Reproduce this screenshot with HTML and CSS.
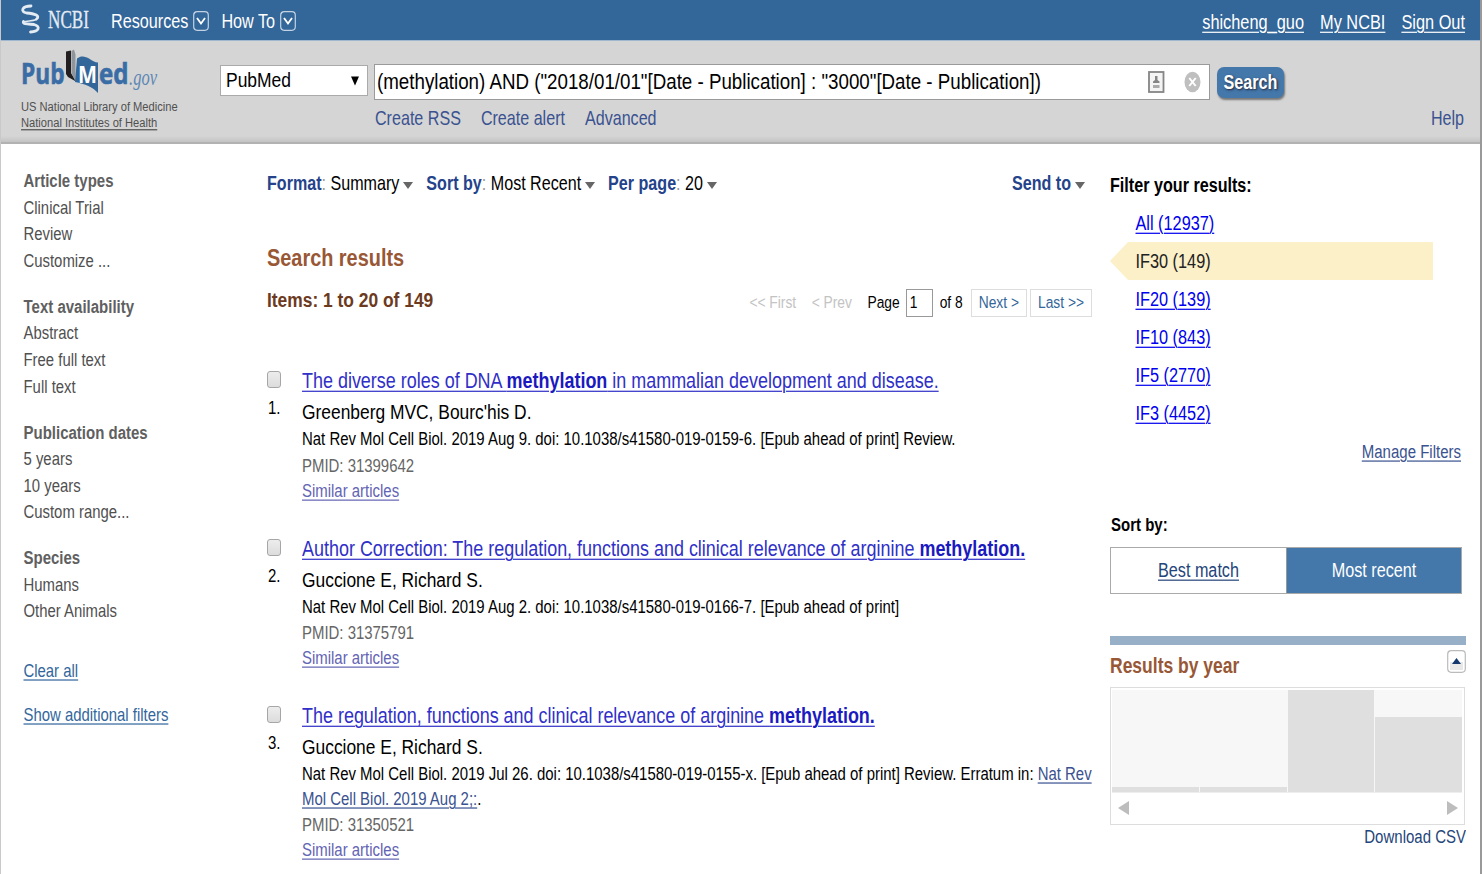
FILE: index.html
```html
<!DOCTYPE html>
<html lang="en">
<head>
<meta charset="utf-8">
<title>PubMed search results</title>
<link rel="stylesheet" href="styles.css">
</head>
<body>
<div class="page">
  <nav class="topbar">
    <svg class="ncbi" width="76" height="34" viewBox="0 0 76 34">
      <g fill="none" stroke="#e3ebf3" stroke-linecap="round">
        <path d="M10 4C1 4-1 9.500 5.500 11C14 11.500 19.500 14 15.500 17" stroke-width="2.800"/>
        <path d="M15.500 17.500C11 19.500 6 18.500 2.500 20" stroke-width="1.400"/>
        <path d="M2.500 19.500C1 22.500 8 22 13 22.500C20 24.500 18 29.500 9.500 30" stroke-width="2.800"/>
      </g>
      <text class="ncbi-word" x="27" y="25.500" textLength="41" lengthAdjust="spacingAndGlyphs">NCBI</text>
    </svg>
    <a class="menu"><span class="t">Resources</span><svg width="16" height="20" viewBox="0 0 16 20"><rect x=".7" y=".7" width="14.600" height="18.600" rx="3.500" fill="none" stroke="#c3d3e3" stroke-width="1.200"/><path d="M4 7l4 5.500L12 7" fill="none" stroke="#fff" stroke-width="1.800"/></svg></a>
    <a class="menu"><span class="t">How To</span><svg width="16" height="20" viewBox="0 0 16 20"><rect x=".7" y=".7" width="14.600" height="18.600" rx="3.500" fill="none" stroke="#c3d3e3" stroke-width="1.200"/><path d="M4 7l4 5.500L12 7" fill="none" stroke="#fff" stroke-width="1.800"/></svg></a>
    <div class="account"><a class="t u">shicheng_guo</a><a class="t u">My NCBI</a><a class="t u">Sign Out</a></div>
  </nav>

  <header class="header">
    <div class="brand">
      <svg width="150" height="50" viewBox="0 0 150 50">
        <path d="M45 3.500l5-1v22.500l5 8.500-8-4.500-2-3z" fill="#231f20"/>
        <path d="M50.500 3l2.500-1.500 1.500 5v27l-4-8.500z" fill="#8f959c"/>
        <path d="M56 10.500c4-3.500 9-2 12 0 3 2 6 4 9 4v30.500c-5-6-13-9-23-11z" fill="#336699"/>
        <text class="pub" x="0" y="36" textLength="43.500" lengthAdjust="spacingAndGlyphs">Pub</text>
        <text class="em" x="57" y="34.500" textLength="19" lengthAdjust="spacingAndGlyphs">M</text>
        <text class="pub" x="78" y="36" textLength="29.500" lengthAdjust="spacingAndGlyphs">ed</text>
        <text class="gov" x="108" y="36.500" textLength="28" lengthAdjust="spacingAndGlyphs">.gov</text>
      </svg>
      <div class="org"><span class="t">US National Library of Medicine</span></div>
      <div class="org"><a class="t u">National Institutes of Health</a></div>
    </div>
    <div class="search">
      <div class="searchrow">
        <div class="select"><span class="t">PubMed</span><svg width="8" height="10" viewBox="0 0 8 10"><path d="M0 .5h8L4 9.500z" fill="#000"/></svg></div>
        <div class="query"><span class="t">(methylation) AND ("2018/01/01"[Date - Publication] : "3000"[Date - Publication])</span>
          <svg class="card" width="17" height="22" viewBox="0 0 17 22"><rect x="1" y="1" width="14.500" height="20" fill="#f4f4f4" stroke="#858585" stroke-width="1.800"/><path d="M7 5h2.500v4l2 1.500v1.500H5v-1.500L7 9z" fill="#858585"/><rect x="5" y="14" width="6.500" height="3" fill="#aaa"/></svg>
          <svg width="17" height="22" viewBox="0 0 17 22"><ellipse cx="8.500" cy="11" rx="8" ry="10.300" fill="#bfbfbf"/><path d="M5.300 7l6.400 8M11.700 7l-6.400 8" stroke="#fff" stroke-width="2"/></svg>
        </div>
        <div class="go"><span class="t">Search</span></div>
      </div>
      <div class="links"><a class="t">Create RSS</a><a class="t">Create alert</a><a class="t">Advanced</a><a class="t help">Help</a></div>
    </div>
  </header>

  <main class="main">
    <aside class="side">
      <div class="group"><h3><span class="t">Article types</span></h3><div><span class="t">Clinical Trial</span></div><div><span class="t">Review</span></div><div><span class="t">Customize ...</span></div></div>
      <div class="group"><h3><span class="t">Text availability</span></h3><div><span class="t">Abstract</span></div><div><span class="t">Free full text</span></div><div><span class="t">Full text</span></div></div>
      <div class="group"><h3><span class="t">Publication dates</span></h3><div><span class="t">5 years</span></div><div><span class="t">10 years</span></div><div><span class="t">Custom range...</span></div></div>
      <div class="group"><h3><span class="t">Species</span></h3><div><span class="t">Humans</span></div><div><span class="t">Other Animals</span></div></div>
      <div class="more first"><a class="t u">Clear all</a></div>
      <div class="more"><a class="t u">Show additional filters</a></div>
    </aside>

    <section class="results">
      <div class="display">
        <span class="opt"><span class="t"><b>Format</b><i>:</i> Summary</span><svg width="10" height="7" viewBox="0 0 10 7"><path d="M0 0h10L5 7z" fill="#666"/></svg></span>
        <span class="opt sort"><span class="t"><b>Sort by</b><i>:</i> Most Recent</span><svg width="10" height="7" viewBox="0 0 10 7"><path d="M0 0h10L5 7z" fill="#666"/></svg></span>
        <span class="opt"><span class="t"><b>Per page</b><i>:</i> 20</span><svg width="10" height="7" viewBox="0 0 10 7"><path d="M0 0h10L5 7z" fill="#666"/></svg></span>
        <span class="opt send"><span class="t"><b>Send to</b></span><svg width="10" height="7" viewBox="0 0 10 7"><path d="M0 0h10L5 7z" fill="#666"/></svg></span>
      </div>
      <h2 class="heading"><span class="t">Search results</span></h2>
      <div class="count">
        <h3><span class="t">Items: 1 to 20 of 149</span></h3>
        <div class="pager">
          <span class="t off">&lt;&lt; First</span><span class="t off prev">&lt; Prev</span><span class="t">Page</span><span class="num"><span class="t">1</span></span><span class="t of">of 8</span><a class="btn"><span class="t">Next &gt;</span></a><a class="btn last"><span class="t">Last &gt;&gt;</span></a>
        </div>
      </div>

      <article class="item">
        <div class="pick"><span class="box"></span><span class="t">1.</span></div>
        <div class="body">
          <div class="title"><a class="t u">The diverse roles of DNA <b>methylation</b> in mammalian development and disease.</a></div>
          <div class="authors"><span class="t">Greenberg MVC, Bourc'his D.</span></div>
          <div class="journal"><span class="t">Nat Rev Mol Cell Biol. 2019 Aug 9. doi: 10.1038/s41580-019-0159-6. [Epub ahead of print] Review.</span></div>
          <div class="pmid"><span class="t">PMID: 31399642</span></div>
          <div class="similar"><a class="t u">Similar articles</a></div>
        </div>
      </article>
      <article class="item">
        <div class="pick"><span class="box"></span><span class="t">2.</span></div>
        <div class="body">
          <div class="title"><a class="t u">Author Correction: The regulation, functions and clinical relevance of arginine <b>methylation.</b></a></div>
          <div class="authors"><span class="t">Guccione E, Richard S.</span></div>
          <div class="journal"><span class="t">Nat Rev Mol Cell Biol. 2019 Aug 2. doi: 10.1038/s41580-019-0166-7. [Epub ahead of print]</span></div>
          <div class="pmid"><span class="t">PMID: 31375791</span></div>
          <div class="similar"><a class="t u">Similar articles</a></div>
        </div>
      </article>
      <article class="item">
        <div class="pick"><span class="box"></span><span class="t">3.</span></div>
        <div class="body">
          <div class="title"><a class="t u">The regulation, functions and clinical relevance of arginine <b>methylation.</b></a></div>
          <div class="authors"><span class="t">Guccione E, Richard S.</span></div>
          <div class="journal"><span class="t">Nat Rev Mol Cell Biol. 2019 Jul 26. doi: 10.1038/s41580-019-0155-x. [Epub ahead of print] Review. Erratum in: <a class="u">Nat Rev</a></span></div>
          <div class="journal"><span class="t"><a class="u">Mol Cell Biol. 2019 Aug 2;:</a>.</span></div>
          <div class="pmid"><span class="t">PMID: 31350521</span></div>
          <div class="similar"><a class="t u">Similar articles</a></div>
        </div>
      </article>
    </section>

    <aside class="tools">
      <h3 class="label"><span class="t">Filter your results:</span></h3>
      <ul class="filters">
        <li><a class="t u">All (12937)</a></li>
        <li class="on"><span class="t">IF30 (149)</span></li>
        <li><a class="t u">IF20 (139)</a></li>
        <li><a class="t u">IF10 (843)</a></li>
        <li><a class="t u">IF5 (2770)</a></li>
        <li><a class="t u">IF3 (4452)</a></li>
      </ul>
      <div class="manage"><a class="t u">Manage Filters</a></div>
      <h3 class="label sortlabel"><span class="t">Sort by:</span></h3>
      <div class="toggle"><div><a class="t u">Best match</a></div><div class="active"><span class="t">Most recent</span></div></div>
      <div class="year">
        <div class="yearhead"><h3><span class="t">Results by year</span></h3><svg width="19" height="23" viewBox="0 0 19 23"><rect x=".7" y=".7" width="17.600" height="21.600" rx="3.500" fill="#fff" stroke="#bbb" stroke-width="1.200"/><path d="M3 12h13v8H3z" fill="#e8e8e8"/><path d="M5 14l4.500-6 4.500 6z" fill="#12386e"/></svg></div>
        <div class="chart">
          <div class="bars"><div style="height:5px"></div><div style="height:5px"></div><div style="height:102px"></div><div style="height:75px"></div></div>
          <div class="scroll"><svg width="11" height="14" viewBox="0 0 11 14"><path d="M11 0v14L0 7z" fill="#bdbdbd"/></svg><svg width="11" height="14" viewBox="0 0 11 14"><path d="M0 0v14l11-7z" fill="#bdbdbd"/></svg></div>
        </div>
        <div class="csv"><a class="t">Download CSV</a></div>
      </div>
    </aside>
  </main>
</div>
</body>
</html>
```
FILE: styles.css
```css
* { box-sizing: border-box; }
body { margin: 0; background: #fff; font-family: "Liberation Sans", Arial, sans-serif; font-size: 15px; color: #000; }
h2, h3, ul { margin: 0; padding: 0; font-size: inherit; list-style: none; }
i { font-style: normal; }
svg { flex: none; overflow: visible; }

/* Tall, condensed lettering used for every line of text. */
.t { display: inline-block; transform: scaleY(1.21); white-space: pre; line-height: inherit; }
.u { text-decoration: underline; text-decoration-thickness: 1px; text-underline-offset: 1.500px; }

.page { height: 874px; overflow: hidden; border-left: 1px solid #c9c9c9; border-right: 2px solid #999; }

.topbar { display: flex; align-items: center; height: 40px; padding: 0 15px 0 20px; background: #336699; color: #fff; font-size: 16.2px; line-height: 26px; }
.ncbi { margin-right: 14px; margin-top: -2px; }
.ncbi-word { font: 24.5px "Liberation Serif", serif; fill: #e3ebf3; stroke: #e3ebf3; stroke-width: .3px; }
.menu { display: flex; align-items: center; gap: 5px; margin-right: 12px; padding-top: 1px; }
.account { display: flex; gap: 16px; margin-left: auto; padding-top: 4px; font-size: 16.35px; }

.header { display: flex; height: 104px; border-top: 1px solid #9fb8d0; border-bottom: 2px solid #b2b2b2; background: linear-gradient(#d5d5d5 94%, #c4c4c4); }
.brand { width: 219px; padding: 7px 0 0 20px; }
.brand svg { display: block; }
.org { height: 16px; font-size: 11.15px; line-height: 17px; color: #505050; }
.pub { font: bold 28px "Open Sans", sans-serif; fill: #3a6da5; stroke: #3a6da5; stroke-width: .6px; }
.em { font: bold 24px "Open Sans", sans-serif; fill: #fff; }
.gov { font: italic 24px "Liberation Serif", serif; fill: #5d87b4; }
.search { flex: 1; padding-top: 23px; }
.searchrow { display: flex; align-items: flex-start; }
.select { display: flex; align-items: center; justify-content: space-between; width: 148px; height: 31px; margin: 1px 6px 0 0; padding: 0 8px 0 5px; border: 1px solid #aaa; background: #fff; font-size: 17.45px; }
.query { display: flex; align-items: center; width: 836px; height: 36px; margin-right: 7px; padding: 0 8px 0 2px; border: 1px solid #9a9a9a; background: #fff; font-size: 18.74px; }
.card { margin: 0 19px 0 auto; }
.go { display: flex; align-items: center; justify-content: center; width: 67px; height: 31px; margin-top: 3px; border-radius: 7px; background: #4477aa; box-shadow: 1px 2px 2px #777; color: #fff; font-weight: bold; font-size: 16.2px; text-shadow: 1px 1px 2px #223; }
.links { display: flex; gap: 20px; padding: 5px 16px 0 155px; font-size: 16.1px; line-height: 26px; color: #3a5290; }
.help { margin-left: auto; }

.main { display: flex; }
.side { flex: none; width: 243px; padding: 24px 0 0 22.500px; font-size: 14.9px; line-height: 26.600px; color: #505050; }
.side h3 { color: #606060; font-size: 15px; }
.group { margin-bottom: 19.400px; }
.more { margin-bottom: 17.500px; color: #33669c; }
.first { margin-top: 32.500px; }

.results { flex: none; width: 848px; padding: 26px 0 0 23px; }
.display { display: flex; height: 26px; line-height: 26px; font-size: 16.1px; }
.display b { color: #24438a; }
.display i { color: #999; }
.opt { display: flex; align-items: center; gap: 4px; margin-right: 13px; }
.opt svg { margin-top: 4px; }
.send { margin: 0 7px 0 auto; }
.heading { margin-top: 47px; line-height: 30px; font-size: 19.9px; color: #985735; }
.count { display: flex; justify-content: space-between; height: 28px; margin-top: 16px; line-height: 22px; }
.count h3 { font-size: 17.4px; color: #6c3a1e; }
.pager { display: flex; align-items: center; font-size: 13.8px; line-height: 24px; }
.off { color: #c3c3c3; }
.prev { margin: 0 15.500px; }
.num { width: 27px; height: 28px; margin: 0 7px 0 6px; padding: 1px 3px; border: 1px solid #999; }
.of { margin-right: 8px; }
.btn { height: 28px; padding: 1px 7px; border: 1px solid #ddd; color: #336699; }
.last { margin-left: 3px; }

.item { display: flex; margin-bottom: 29px; }
.count + .item { margin-top: 48px; }
.pick { flex: none; display: flex; flex-direction: column; width: 35px; padding-top: 6px; line-height: 24px; }
.pick .t { align-self: flex-start; margin: 8px 0 0 1px; }
.box { width: 14px; height: 17px; border: 1px solid #a6a6a6; border-radius: 3px; background: linear-gradient(#ededed, #dcdcdc); }
.body { flex: 1; min-width: 0; font-size: 14.95px; }
.title { height: 32px; line-height: 32px; font-size: 17.97px; color: #3030c8; }
.title b { color: #1a1ac0; }
.authors { height: 30px; line-height: 30px; font-size: 17.4px; }
.journal { height: 24.500px; line-height: 24.500px; }
.journal a { color: #3a5290; }
.pmid { height: 27px; line-height: 28px; color: #666; }
.similar { height: 25px; line-height: 23.500px; color: #6464b4; }

.tools { flex: none; width: 356px; margin-left: 18px; padding-top: 28px; }
.label { line-height: 26px; font-size: 16.15px; }
.filters { padding-top: 6px; font-size: 16.3px; line-height: 38px; color: #0000ee; }
.filters li { display: flex; height: 38px; padding-left: 25.500px; }
.filters .on { width: 323px; color: #222; background: #fbf0c8; clip-path: polygon(0 50%, 18px 0, 100% 0, 100% 100%, 18px 100%); }
.manage { padding: 7px 5px 0 0; text-align: right; line-height: 26px; color: #3a5290; }
.sortlabel { margin-top: 47px; padding-left: 1px; font-size: 15px; }
.toggle { display: grid; grid-template-columns: 1fr 1fr; width: 352px; height: 47px; margin-top: 9px; border: 1px solid #aaa; font-size: 16.2px; line-height: 45px; text-align: center; color: #24457a; }
.active { border-left: 1px solid #999; background: #4477aa; color: #fff; }
.year { margin-top: 42px; border-top: 9px solid #97b0c8; }
.yearhead { display: flex; justify-content: space-between; height: 42px; padding-top: 5px; line-height: 32px; font-size: 17.5px; color: #985735; }
.chart { width: 355px; height: 138px; border: 1px solid #ddd; padding: 2px 2px 0 1px; }
.bars { display: grid; grid-template-columns: repeat(4, 1fr); gap: 1px; align-items: end; height: 103px; background: #f7f7f7; border-bottom: 1px solid #eee; }
.bars div { background: #dfdfdf; }
.scroll { display: flex; justify-content: space-between; padding: 8px 4px 0 6px; }
.csv { text-align: right; line-height: 24px; color: #24457a; }
```
